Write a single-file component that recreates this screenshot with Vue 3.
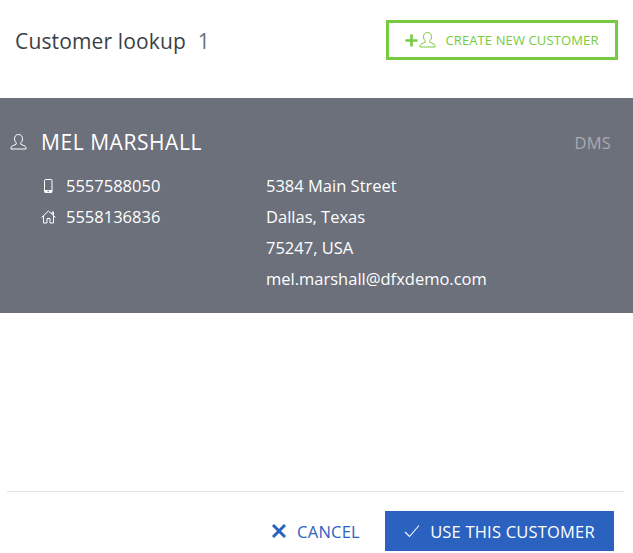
<template>
  <div class="lookup">
    <header class="top">
      <h2>Customer lookup <span class="count">1</span></h2>
      <button class="create">
        <svg class="plus" width="13" height="13" viewBox="0 0 13 13"><path d="M6.5 0.5v12M0.5 6.5h12" stroke="currentColor" stroke-width="2.6" fill="none" /></svg>
        <svg width="17" height="16" viewBox="0 0 17 16"><path :d="personPath" stroke="currentColor" fill="none" /></svg>
        <span>CREATE NEW CUSTOMER</span>
      </button>
    </header>

    <section class="card">
      <div class="name-row">
        <svg class="person" width="17" height="16" viewBox="0 0 17 16"><path :d="personPath" stroke="currentColor" fill="none" /></svg>
        <span class="name">MEL MARSHALL</span>
        <span class="source">DMS</span>
      </div>
      <div class="details">
        <div class="phones">
          <div class="line">
            <svg width="15" height="16" viewBox="0 0 15 16"><rect x="3.5" y="1.5" width="7.5" height="13" rx="1" stroke="#fff" fill="none" /><path d="M3.5 12h7.5v2.5h-7.5z" fill="#fff" /><rect x="6.5" y="12.8" width="1.5" height="1" fill="#6c707b" /></svg>
            <span>5557588050</span>
          </div>
          <div class="line">
            <svg width="15" height="14" viewBox="0 0 15 14"><path d="M.5 7.5 7.5 1l7 6.5M2.5 6v7h3.5V8.5h3V13h3.500V6M11 4V2h1.500v3.400" stroke="#fff" fill="none" /></svg>
            <span>5558136836</span>
          </div>
        </div>
        <div class="address">
          <div>5384 Main Street</div>
          <div>Dallas, Texas</div>
          <div>75247, USA</div>
          <div>mel.marshall@dfxdemo.com</div>
        </div>
      </div>
    </section>

    <footer class="bottom">
      <button class="cancel">
        <svg width="16" height="16" viewBox="0 0 16 16"><path d="M2 2l12 12M14 2 2 14" stroke="currentColor" stroke-width="3" fill="none" /></svg>
        CANCEL
      </button>
      <button class="use">
        <svg width="16" height="14" viewBox="0 0 16 14"><path d="M1 8l4.500 4.500L15 1.500" stroke="#fff" stroke-width="1.100" fill="none" /></svg>
        USE THIS CUSTOMER
      </button>
    </footer>
  </div>
</template>

<script setup>
// shared outline for the customer icon
const personPath = 'M8.500.5C6 .5 4.500 2.300 4.500 4.800c0 1.700.7 3 1.700 3.900v1.500c-1.500 1-5.200 1.600-5.200 3.300v1.500h15v-1.500c0-1.700-3.700-2.300-5.200-3.300V8.700c1-.9 1.700-2.200 1.700-3.900C12.500 2.300 11 .5 8.500.5z'
</script>

<style>
body { margin: 0; background: #fff; }
</style>

<style scoped>
.lookup {
  width: 633px;
  height: 553px;
  display: flex;
  flex-direction: column;
  font-family: "Open Sans", "Noto Sans", sans-serif;
  overflow: hidden;
}
.top {
  height: 98px;
  box-sizing: border-box;
  padding: 20px 15px 0 15px;
  display: flex;
  justify-content: space-between;
  align-items: flex-start;
}
h2 {
  margin: 6px 0 0;
  font-size: 21px;
  line-height: 30px;
  font-weight: 400;
  color: #3a3f47;
  letter-spacing: 0.15px;
}
.count { color: #6b7280; margin-left: 6px; }
button {
  font-family: inherit;
  background: none;
  border: none;
  padding: 0;
}
.create {
  width: 232px;
  height: 40px;
  box-sizing: border-box;
  border: 3px solid #76cb40;
  color: #76cb40;
  display: flex;
  align-items: center;
  justify-content: center;
  font-size: 13px;
  letter-spacing: 0.12px;
}
.create .plus { margin-right: 1px; }
.create span { margin-left: 9px; }
.card {
  height: 215px;
  box-sizing: border-box;
  background: #6c707b;
  color: #fff;
  padding: 28px 22px 0 10px;
}
.name-row {
  display: flex;
  align-items: center;
  height: 32px;
}
.name {
  margin-left: 14px;
  font-size: 21px;
  letter-spacing: 0.55px;
}
.source {
  margin-left: auto;
  font-size: 16.5px;
  color: #a8aab1;
  letter-spacing: 0.2px;
}
.details {
  display: flex;
  margin-top: 12px;
  font-size: 16.5px;
  line-height: 31px;
}
.phones { width: 256px; padding-left: 31px; box-sizing: border-box; }
.line { display: flex; align-items: center; }
.line svg { width: 15px; margin-right: 10px; }
.bottom {
  margin: 178px 9px 0 7px;
  border-top: 1px solid #e3e3e3;
  padding: 19px 10px 0 0;
  display: flex;
  justify-content: flex-end;
  align-items: center;
}
.cancel {
  display: flex;
  align-items: center;
  gap: 10px;
  color: #2b62c0;
  font-size: 16.5px;
  letter-spacing: 0.25px;
  margin-right: 25px;
}
.use {
  width: 229px;
  height: 40px;
  background: #2b62c0;
  color: #fff;
  font-size: 16.5px;
  letter-spacing: 0.2px;
  display: flex;
  align-items: center;
  justify-content: center;
  gap: 10px;
}
</style>
